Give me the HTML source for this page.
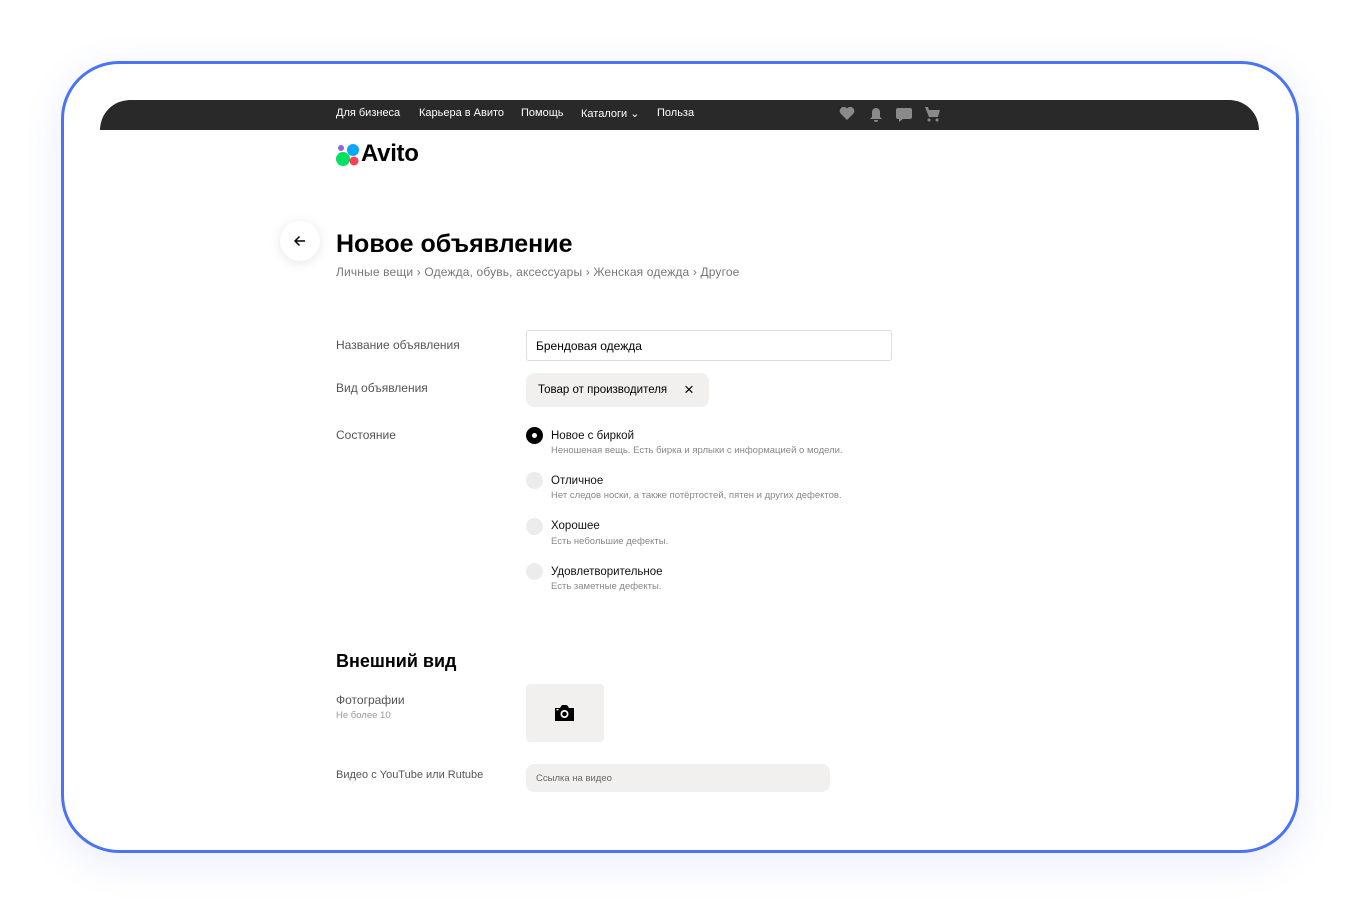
<!DOCTYPE html>
<html><head><meta charset="utf-8"><style>
*{margin:0;padding:0;box-sizing:border-box}
body{width:1360px;height:914px;background:#fff;font-family:"Liberation Sans",sans-serif;position:relative;overflow:hidden;color:#000}
.frame{position:absolute;left:61px;top:61px;width:1238px;height:792px;border:3px solid #4a74f5;border-radius:58px;background:#fff;box-shadow:0 10px 40px rgba(80,110,240,0.12);overflow:hidden}
.a{position:absolute;white-space:nowrap}
.bar{position:absolute;left:100px;top:100px;width:1159px;height:30px;background:#292929;border-radius:40px 40px 0 0}
.nav{color:#fff;font-size:11px;top:107px}
.lbl{font-size:12px;color:#555}
.r{position:absolute;width:17px;height:17px;border-radius:50%;background:#ececec;left:526px}
.t{font-size:11.5px;color:#111}
.d{font-size:9.5px;color:#888}
</style></head><body>
<div class="frame"></div>
<div class="bar"></div>
<div class="a nav" style="left:336px">Для бизнеса</div>
<div class="a nav" style="left:419px">Карьера в Авито</div>
<div class="a nav" style="left:521px">Помощь</div>
<div class="a nav" style="left:581px">Каталоги ⌄</div>
<div class="a nav" style="left:657px">Польза</div>
<svg class="a" style="left:838px;top:104px" width="110" height="20" viewBox="0 0 110 20">
<g fill="#8a8a8a">
<path d="M9 16 L2.5 9.5 A3.5 3.5 0 0 1 9 4.5 A3.5 3.5 0 0 1 15.5 9.5Z"/>
<path d="M38 4 A4 4 0 0 0 34 8 L34 13 L32 15 L44 15 L42 13 L42 8 A4 4 0 0 0 38 4Z M36 16 h4 a2 2 0 0 1 -4 0Z"/>
<path d="M60 4 h12 a2 2 0 0 1 2 2 v7 a2 2 0 0 1 -2 2 h-7 l-4 3 v-3 h-1 a2 2 0 0 1 -2 -2 v-7 a2 2 0 0 1 2 -2Z"/>
<path d="M87 3 h3 l1 3 h11 l-2 7 h-9 Z"/><circle cx="91" cy="16" r="1.5"/><circle cx="99" cy="16" r="1.5"/>
</g></svg>
<svg class="a" style="left:336px;top:143px" width="26" height="24" viewBox="0 0 26 24">
<circle cx="5" cy="5" r="3" fill="#965eeb"/><circle cx="17" cy="7" r="6" fill="#0aa7ff"/>
<circle cx="7" cy="16" r="7" fill="#04e061"/><circle cx="18" cy="18" r="4.5" fill="#ff4053"/></svg>
<div class="a" style="left:361px;top:140px;font-size:24px;font-weight:bold;letter-spacing:-0.3px">Avito</div>
<div class="a" style="left:280px;top:221px;width:40px;height:40px;border-radius:50%;background:#fff;box-shadow:0 2px 12px rgba(0,0,0,0.1)"></div>
<svg class="a" style="left:292px;top:233px" width="16" height="16" viewBox="0 0 16 16"><path d="M13 8H3M7.5 3.5L3 8l4.5 4.5" stroke="#000" stroke-width="1.5" fill="none"/></svg>
<div class="a" style="left:336px;top:230px;font-size:25px;font-weight:bold">Новое объявление</div>
<div class="a" style="left:336px;top:265px;font-size:12px;color:#777;letter-spacing:0.15px">Личные вещи › Одежда, обувь, аксессуары › Женская одежда › Другое</div>
<div class="a lbl" style="left:336px;top:338px">Название объявления</div>
<div class="a" style="left:526px;top:330px;width:366px;height:31px;border:1px solid #ddd;border-radius:3px;font-size:12px;padding:8px 9px">Брендовая одежда</div>
<div class="a lbl" style="left:336px;top:381px">Вид объявления</div>
<div class="a" style="left:526px;top:373px;width:183px;height:34px;background:#f1f0ee;border-radius:8px;font-size:11.5px;padding:11px 12px">Товар от производителя<span style="position:absolute;left:158px;top:7px;font-size:17px">×</span></div>
<div class="a lbl" style="left:336px;top:428px">Состояние</div>
<div class="r" style="top:427px;background:#000"><div style="position:absolute;left:6px;top:6px;width:5px;height:5px;border-radius:50%;background:#fff"></div></div>
<div class="a t" style="left:551px;top:430px">Новое с биркой</div>
<div class="a d" style="left:551px;top:445px">Неношеная вещь. Есть бирка и ярлыки с информацией о модели.</div>
<div class="r" style="top:472px"></div>
<div class="a t" style="left:551px;top:475px">Отличное</div>
<div class="a d" style="left:551px;top:490px">Нет следов носки, а также потёртостей, пятен и других дефектов.</div>
<div class="r" style="top:518px"></div>
<div class="a t" style="left:551px;top:520px">Хорошее</div>
<div class="a d" style="left:551px;top:536px">Есть небольшие дефекты.</div>
<div class="r" style="top:563px"></div>
<div class="a t" style="left:551px;top:566px">Удовлетворительное</div>
<div class="a d" style="left:551px;top:581px">Есть заметные дефекты.</div>
<div class="a" style="left:336px;top:651px;font-size:18px;font-weight:bold">Внешний вид</div>
<div class="a lbl" style="left:336px;top:693px">Фотографии</div>
<div class="a" style="left:336px;top:710px;font-size:9.5px;color:#999">Не более 10</div>
<div class="a" style="left:526px;top:684px;width:78px;height:58px;background:#f1f0ee;border-radius:4px"></div>
<svg class="a" style="left:554px;top:704px" width="21" height="18" viewBox="0 0 21 18"><path d="M1 4h5l2-3h5l2 3h5v13H1Z" fill="#000"/><circle cx="10.5" cy="10" r="4" fill="#fff"/><circle cx="10.5" cy="10" r="2.3" fill="#000"/><rect x="2.5" y="5" width="2" height="1.3" fill="#fff"/></svg>
<div class="a lbl" style="left:336px;top:769px;font-size:11px">Видео с YouTube или Rutube</div>
<div class="a" style="left:526px;top:764px;width:304px;height:28px;background:#f1f0ee;border-radius:8px;font-size:9.5px;color:#666;padding:9px 10px">Ссылка на видео</div>
</body></html>
